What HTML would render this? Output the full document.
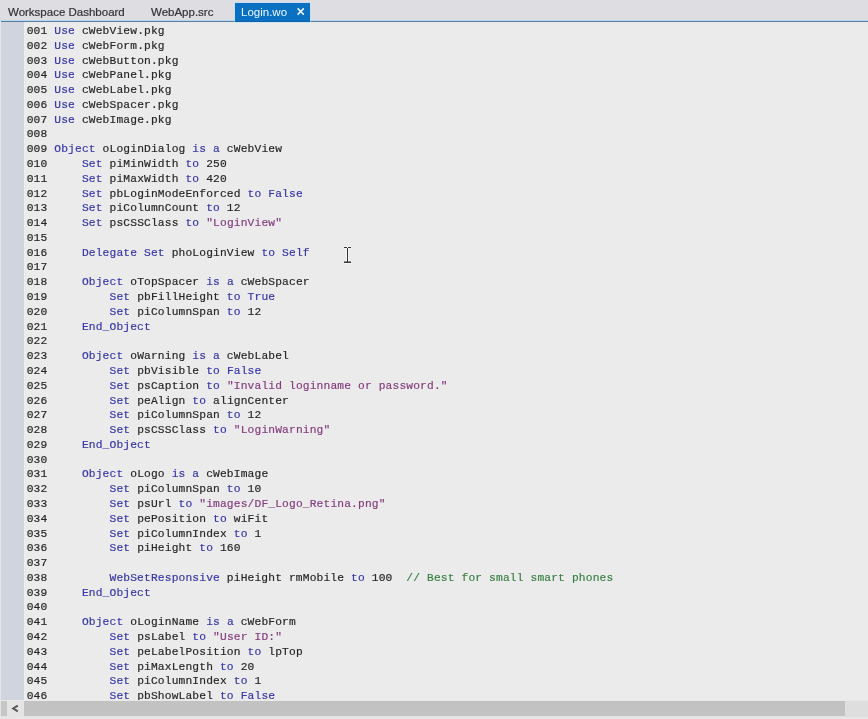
<!DOCTYPE html>
<html><head><meta charset="utf-8">
<style>
*{margin:0;padding:0;box-sizing:border-box}
html,body{width:868px;height:719px;overflow:hidden;background:#ebebeb}
body{position:relative;font-family:"Liberation Sans",sans-serif}
#tabs{position:absolute;left:0;top:0;width:868px;height:20px;background:#dedde1;will-change:transform}
.tab{position:absolute;top:2px;height:20px;font-size:11.5px;color:#333336;line-height:20px;-webkit-text-stroke:0.2px currentColor;white-space:nowrap}
#act{position:absolute;left:235px;top:3px;width:75px;height:19px;background:#0a70c2;color:#fff;z-index:2;box-shadow:0 0 0 1px rgba(190,225,250,0.6),inset 0 -1px 0 #0b62ab}
#line1{position:absolute;left:0;top:20px;width:868px;height:1px;background:#b6d8f2}
#line2{position:absolute;left:1px;top:21px;width:867px;height:1px;background:#5e7b9a}
#gutter{position:absolute;left:1px;top:22px;width:23px;height:678px;background:#d0d4de}
#code{position:absolute;left:0;top:0;width:868px;height:700px;overflow:hidden;will-change:transform}
.ln{position:absolute;left:26.7px;height:0;font-family:"Liberation Mono",monospace;font-size:11.25px;letter-spacing:0.15px;color:#262626;-webkit-text-stroke:0.18px currentColor;white-space:pre}
.ln span{}
i{font-style:normal}
.k{color:#3636a8}
.s{color:#843e7e}
.c{color:#3a8046}
#hsb{position:absolute;left:0;top:700px;width:868px;height:19px;background:#e3e3e3}
#hsb .top{position:absolute;left:0;top:0;width:868px;height:1px;background:#e9e9e9}
#hsb .l{position:absolute;left:1px;top:1px;width:6px;height:15px;background:#c6c6c6}
#hsb .arr{position:absolute;left:7px;top:1px;width:17px;height:15px;background:#e4e4e4}
#hsb .thumb{position:absolute;left:24px;top:1px;width:821px;height:15px;background:#c2c2c2}
#hsb .r{position:absolute;left:845px;top:1px;width:23px;height:16px;background:#dedede}
#hsb .bot{position:absolute;left:0;top:17px;width:868px;height:2px;background:#e6e6e6}
#gedge{position:absolute;left:24px;top:22px;width:1px;height:678px;background:#eeeef0}
#lcol{position:absolute;left:0;top:22px;width:1px;height:678px;background:#e6e6e6}
</style></head><body>
<div id="tabs">
  <div class="tab" style="left:8px">Workspace Dashboard</div>
  <div class="tab" style="left:151px">WebApp.src</div>
</div>
<div id="act"><span class="tab" style="left:6px;top:-1px;color:#eef8ff;-webkit-text-stroke:0">Login.wo</span><svg style="position:absolute;left:0;top:0" width="75" height="19"><path d="M62.6 5.4L68.8 11.6M68.8 5.4L62.6 11.6" stroke="#eef8ff" stroke-width="1.5"/></svg></div>
<div id="line1"></div><div id="line2"></div>
<div id="gutter"></div><div id="gedge"></div>
<div id="code">
<div class="ln" style="top:25.00px">001 <i class="k">Use</i> cWebView.pkg</div>
<div class="ln" style="top:39.78px">002 <i class="k">Use</i> cWebForm.pkg</div>
<div class="ln" style="top:54.56px">003 <i class="k">Use</i> cWebButton.pkg</div>
<div class="ln" style="top:69.34px">004 <i class="k">Use</i> cWebPanel.pkg</div>
<div class="ln" style="top:84.12px">005 <i class="k">Use</i> cWebLabel.pkg</div>
<div class="ln" style="top:98.90px">006 <i class="k">Use</i> cWebSpacer.pkg</div>
<div class="ln" style="top:113.68px">007 <i class="k">Use</i> cWebImage.pkg</div>
<div class="ln" style="top:128.46px">008 </div>
<div class="ln" style="top:143.24px">009 <i class="k">Object</i> oLoginDialog <i class="k">is</i> <i class="k">a</i> cWebView</div>
<div class="ln" style="top:158.02px">010     <i class="k">Set</i> piMinWidth <i class="k">to</i> 250</div>
<div class="ln" style="top:172.80px">011     <i class="k">Set</i> piMaxWidth <i class="k">to</i> 420</div>
<div class="ln" style="top:187.58px">012     <i class="k">Set</i> pbLoginModeEnforced <i class="k">to</i> <i class="k">False</i></div>
<div class="ln" style="top:202.36px">013     <i class="k">Set</i> piColumnCount <i class="k">to</i> 12</div>
<div class="ln" style="top:217.14px">014     <i class="k">Set</i> psCSSClass <i class="k">to</i> <i class="s">&quot;LoginView&quot;</i></div>
<div class="ln" style="top:231.92px">015 </div>
<div class="ln" style="top:246.70px">016     <i class="k">Delegate</i> <i class="k">Set</i> phoLoginView <i class="k">to</i> <i class="k">Self</i></div>
<div class="ln" style="top:261.48px">017 </div>
<div class="ln" style="top:276.26px">018     <i class="k">Object</i> oTopSpacer <i class="k">is</i> <i class="k">a</i> cWebSpacer</div>
<div class="ln" style="top:291.04px">019         <i class="k">Set</i> pbFillHeight <i class="k">to</i> <i class="k">True</i></div>
<div class="ln" style="top:305.82px">020         <i class="k">Set</i> piColumnSpan <i class="k">to</i> 12</div>
<div class="ln" style="top:320.60px">021     <i class="k">End_Object</i></div>
<div class="ln" style="top:335.38px">022 </div>
<div class="ln" style="top:350.16px">023     <i class="k">Object</i> oWarning <i class="k">is</i> <i class="k">a</i> cWebLabel</div>
<div class="ln" style="top:364.94px">024         <i class="k">Set</i> pbVisible <i class="k">to</i> <i class="k">False</i></div>
<div class="ln" style="top:379.72px">025         <i class="k">Set</i> psCaption <i class="k">to</i> <i class="s">&quot;Invalid loginname or password.&quot;</i></div>
<div class="ln" style="top:394.50px">026         <i class="k">Set</i> peAlign <i class="k">to</i> alignCenter</div>
<div class="ln" style="top:409.28px">027         <i class="k">Set</i> piColumnSpan <i class="k">to</i> 12</div>
<div class="ln" style="top:424.06px">028         <i class="k">Set</i> psCSSClass <i class="k">to</i> <i class="s">&quot;LoginWarning&quot;</i></div>
<div class="ln" style="top:438.84px">029     <i class="k">End_Object</i></div>
<div class="ln" style="top:453.62px">030 </div>
<div class="ln" style="top:468.40px">031     <i class="k">Object</i> oLogo <i class="k">is</i> <i class="k">a</i> cWebImage</div>
<div class="ln" style="top:483.18px">032         <i class="k">Set</i> piColumnSpan <i class="k">to</i> 10</div>
<div class="ln" style="top:497.96px">033         <i class="k">Set</i> psUrl <i class="k">to</i> <i class="s">&quot;images/DF_Logo_Retina.png&quot;</i></div>
<div class="ln" style="top:512.74px">034         <i class="k">Set</i> pePosition <i class="k">to</i> wiFit</div>
<div class="ln" style="top:527.52px">035         <i class="k">Set</i> piColumnIndex <i class="k">to</i> 1</div>
<div class="ln" style="top:542.30px">036         <i class="k">Set</i> piHeight <i class="k">to</i> 160</div>
<div class="ln" style="top:557.08px">037 </div>
<div class="ln" style="top:571.86px">038         <i class="k">WebSetResponsive</i> piHeight rmMobile <i class="k">to</i> 100  <i class="c">// Best for small smart phones</i></div>
<div class="ln" style="top:586.64px">039     <i class="k">End_Object</i></div>
<div class="ln" style="top:601.42px">040 </div>
<div class="ln" style="top:616.20px">041     <i class="k">Object</i> oLoginName <i class="k">is</i> <i class="k">a</i> cWebForm</div>
<div class="ln" style="top:630.98px">042         <i class="k">Set</i> psLabel <i class="k">to</i> <i class="s">&quot;User ID:&quot;</i></div>
<div class="ln" style="top:645.76px">043         <i class="k">Set</i> peLabelPosition <i class="k">to</i> lpTop</div>
<div class="ln" style="top:660.54px">044         <i class="k">Set</i> piMaxLength <i class="k">to</i> 20</div>
<div class="ln" style="top:675.32px">045         <i class="k">Set</i> piColumnIndex <i class="k">to</i> 1</div>
<div class="ln" style="top:690.10px">046         <i class="k">Set</i> pbShowLabel <i class="k">to</i> <i class="k">False</i></div>
</div>
<div id="hsb"><div class="top"></div><div class="l"></div><div class="arr"></div><div class="thumb"></div><div class="r"></div><div class="bot"></div>
<svg style="position:absolute;left:0;top:0" width="30" height="19"><path d="M17.8 5.6 L13.2 8.5 L17.8 11.4" fill="none" stroke="#5a5a5a" stroke-width="2" stroke-linejoin="miter"/></svg></div>
<div id="lcol"></div>
<svg style="position:absolute;left:340px;top:243px" width="16" height="24"><g fill="none" stroke="#fff" stroke-width="3" opacity="0.55"><path d="M4 4.5h3.5M7.5 4.5h3.5M7.5 5v15M4 19.5h7"/></g><g fill="none" stroke="#333" stroke-width="1"><path d="M4 4.5h3M8 4.5h3M7.5 5v14.5"/><path d="M4 19.2h7" stroke-width="1.5"/></g></svg>
</body></html>
